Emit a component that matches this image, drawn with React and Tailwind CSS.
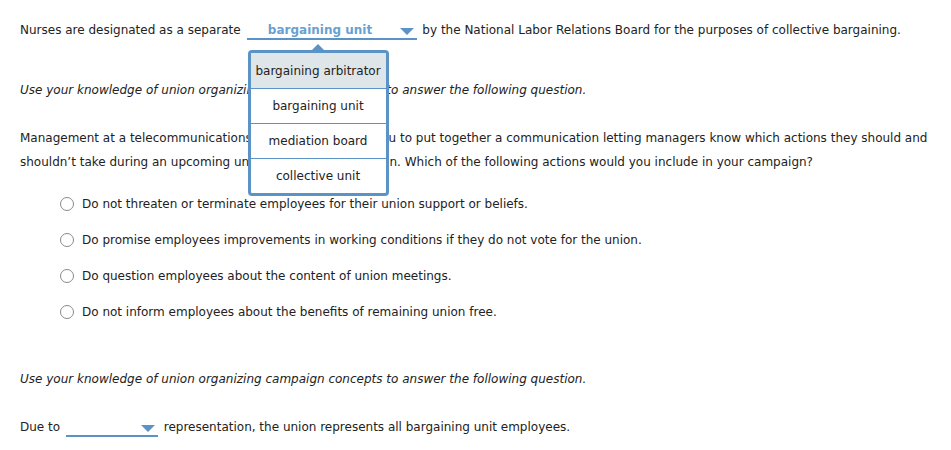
import { useState } from "react";

const font = { fontFamily: '"DejaVu Sans", Verdana, sans-serif' };

const options = ["bargaining arbitrator", "bargaining unit", "mediation board", "collective unit"];

const answers = [
  "Do not threaten or terminate employees for their union support or beliefs.",
  "Do promise employees improvements in working conditions if they do not vote for the union.",
  "Do question employees about the content of union meetings.",
  "Do not inform employees about the benefits of remaining union free.",
];

function Caret() {
  return (
    <svg width="14" height="8" viewBox="0 0 14 8" className="block shrink-0">
      <path d="M0 0 L14 0 L7 7 Z" fill="#5b93c6" />
    </svg>
  );
}

function Dropdown({ value, width, open }) {
  return (
    <span className="relative inline-block align-top mx-[2px]">
      <span className={`flex items-start h-[22px] border-b-2 border-[#5b93c6] ${width}`}>
        <span className="flex-1 text-center font-bold text-[#6a9fd2] leading-[24px] pr-[6px]">{value}</span>
        <span className="pr-[3px] pt-[10px]">
          <Caret />
        </span>
      </span>

      {/* open option list */}
      {open && (
        <div className="absolute left-[1px] top-[32px] z-10 w-[141px]">
          <div className="absolute left-[64px] -top-[6px] w-0 h-0 border-l-[6px] border-r-[6px] border-b-[6px] border-l-transparent border-r-transparent border-b-[#5b93c6]" />
          <ul className="bg-white border-[3px] border-[#5b93c6] rounded-[4px] overflow-hidden">
            {options.map((o, i) => (
              <li
                key={o}
                className={`h-[35px] flex items-center justify-center text-[#222] whitespace-nowrap ${
                  i === 0 ? "bg-[#dfe6ea]" : "border-t border-[#5b93c6]"
                }`}
              >
                {o}
              </li>
            ))}
          </ul>
        </div>
      )}
    </span>
  );
}

export default function App() {
  const [picked, setPicked] = useState(null);

  return (
    <div className="w-[951px] h-[450px] bg-white text-[#222] text-[12px] leading-[24px] px-[20px] pt-[18px]" style={font}>
      <p className="whitespace-nowrap">
        Nurses are designated as a separate{" "}
        <Dropdown value="bargaining unit" width="w-[170px]" open />{" "}
        by the National Labor Relations Board for the purposes of collective bargaining.
      </p>

      <p className="italic mt-[36px]">
        Use your knowledge of union organizing campaign concepts to answer the following question.
      </p>

      <p className="mt-[24px] w-[911px]">
        Management at a telecommunications company has hired you to put together a communication letting managers know which actions they should and
        shouldn’t take during an upcoming union organizing campaign. Which of the following actions would you include in your campaign?
      </p>

      <ul className="mt-[18px] pl-[40px] flex flex-col gap-[12px]">
        {answers.map((a, i) => (
          <li key={i} className="flex items-center gap-[8px] cursor-pointer" onClick={() => setPicked(i)}>
            <span className="w-[14px] h-[14px] rounded-full border border-[#8a8a8a] bg-white flex items-center justify-center">
              {picked === i && <span className="w-[6px] h-[6px] rounded-full bg-[#444]" />}
            </span>
            {a}
          </li>
        ))}
      </ul>

      <p className="italic mt-[43px]">
        Use your knowledge of union organizing campaign concepts to answer the following question.
      </p>

      <p className="mt-[24px] whitespace-nowrap">
        Due to <Dropdown value="" width="w-[92px]" />{" "}
        representation, the union represents all bargaining unit employees.
      </p>
    </div>
  );
}
